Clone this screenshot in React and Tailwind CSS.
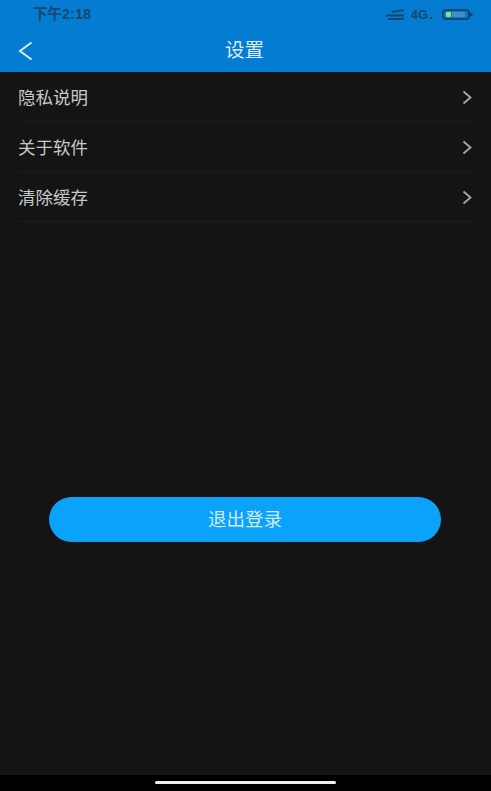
const rows = ["隐私说明", "关于软件", "清除缓存"];

const StatusIcons = () => (
  <div className="flex items-center text-[#17476f]">
    <svg width="20" height="13" viewBox="0 0 20 13" fill="none" stroke="currentColor" strokeWidth="2">
      <path d="M7 4 L19 2" />
      <path d="M1 7.5 H19" />
      <path d="M3 11 H19" />
    </svg>
    <span className="ml-[6px] text-[13px] font-bold leading-none">4G</span>
    <span className="ml-[2px] mt-[6px] h-[2px] w-[2px] bg-current" />
    <svg className="ml-[10px]" width="32" height="13" viewBox="0 0 32 13">
      <rect x="1" y="2" width="26" height="9" rx="3" fill="none" stroke="currentColor" strokeWidth="2" />
      <rect x="4" y="4" width="5" height="5" rx="1" fill="#8ee07a" />
      <rect x="10" y="4" width="13" height="5" rx="1" fill="#3f8fc9" />
      <path d="M28 4 L31.5 6.5 L28 9 Z" fill="currentColor" />
    </svg>
  </div>
);

export default function App() {
  return (
    <div className="flex h-[791px] w-[491px] flex-col overflow-hidden bg-black font-['Liberation_Sans','Noto_Sans_CJK_SC',sans-serif]">
      <header className="h-[72px] shrink-0 bg-[#047cd2]">
        <div className="flex h-[29px] items-center justify-between pl-[33px] pr-[17px]">
          <span className="text-[14.5px] font-bold leading-none text-[#17476f]">下午2:18</span>
          <StatusIcons />
        </div>
        <div className="relative flex h-[43px] items-center justify-center pr-[2px]">
          <svg
            className="absolute left-[18px] top-[12px]"
            width="15"
            height="20"
            viewBox="0 0 15 20"
            fill="none"
            stroke="#dcebf7"
            strokeWidth="2"
          >
            <path d="M13.5 1.5 L2 10 L13.5 18.5" />
          </svg>
          <h1 className="text-[19.5px] leading-none text-[#dcebf7]">设置</h1>
        </div>
      </header>

      <main className="flex flex-1 flex-col bg-[#141414]">
        <ul className="px-[18px]">
          {rows.map((row) => (
            <li
              key={row}
              className="flex h-[50px] items-center justify-between border-b border-[#1c1c1c] pt-[4px] text-[#c8c8c8]"
            >
              <span className="text-[17.5px] leading-none">{row}</span>
              <svg className="mr-[1px] mt-[-2px]" width="10" height="15" viewBox="0 0 10 15" fill="none" stroke="#a8a8a8" strokeWidth="1.8">
                <path d="M1.5 1.5 L8.5 7.5 L1.5 13.5" />
              </svg>
            </li>
          ))}
        </ul>
        <button className="ml-[49px] mt-[275px] h-[45px] w-[392px] rounded-full bg-[#0ba2f9] text-[18.5px] text-[#cfeafc]">
          退出登录
        </button>
      </main>

      <div className="flex h-[16px] shrink-0 items-center justify-center pb-[2px]">
        <div className="h-[3px] w-[181px] rounded-full bg-[#f0f0f0]" />
      </div>
    </div>
  );
}
